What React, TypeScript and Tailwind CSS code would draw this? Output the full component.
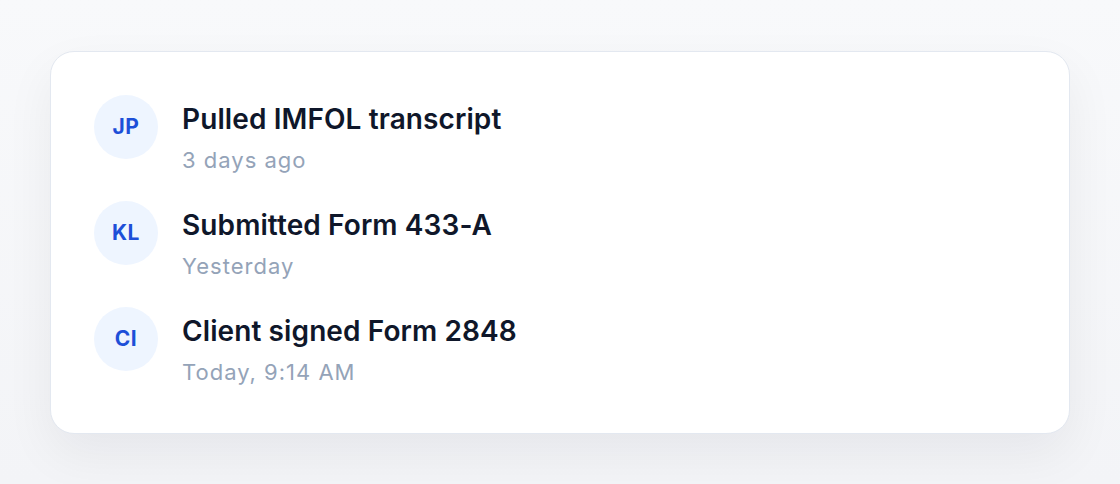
import React from "react";

const items = [
  { initials: "JP", title: "Pulled IMFOL transcript", time: "3 days ago" },
  { initials: "KL", title: "Submitted Form 433-A", time: "Yesterday" },
  { initials: "CI", title: "Client signed Form 2848", time: "Today, 9:14 AM" },
];

export default function App() {
  return (
    <div
      className="w-[1120px] h-[484px] bg-gradient-to-b from-[#f8f9fb] to-[#f3f4f7] px-[50px] pt-[51px]"
      style={{ fontFamily: "Inter, 'Noto Sans', sans-serif" }}
    >
      <div className="rounded-[24px] border border-[#e3e8f0] bg-white pl-[43px] pr-[43px] pt-[43px] pb-[47px] shadow-[0_20px_50px_rgba(15,23,42,0.06)]">
        <div className="flex flex-col gap-[27px]">
          {items.map((it) => (
            <div key={it.initials} className="flex items-start gap-[24px]">
              <div className="flex h-[64px] w-[64px] shrink-0 items-center justify-center rounded-full bg-[#eef5ff] text-[21px] font-bold tracking-[0.5px] text-[#1d4fd8]">
                {it.initials}
              </div>
              <div className="pt-[8px]">
                <div className="text-[28px] leading-[32px] font-semibold tracking-[0.1px] text-[#0f172a]">
                  {it.title}
                </div>
                <div className="mt-[11px] text-[22px] leading-[28px] tracking-[1px] text-[#94a3b8]">
                  {it.time}
                </div>
              </div>
            </div>
          ))}
        </div>
      </div>
    </div>
  );
}
